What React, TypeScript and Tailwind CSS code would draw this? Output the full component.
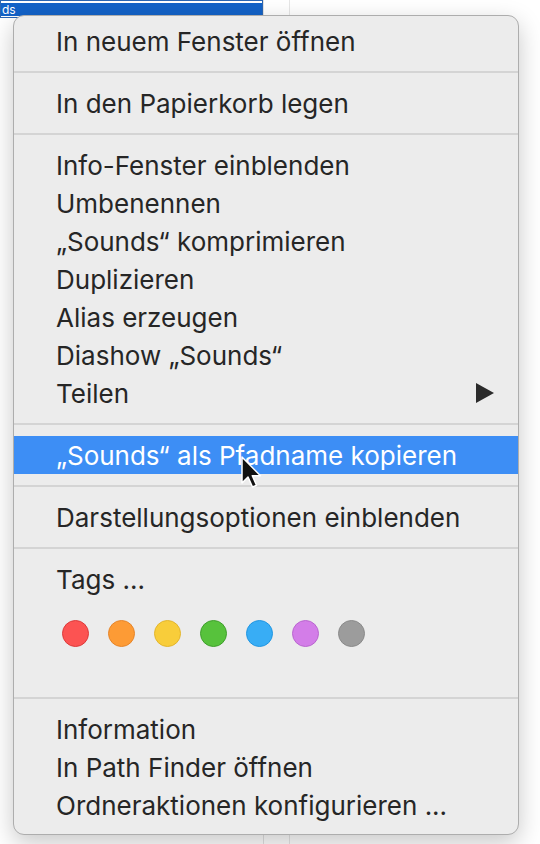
import React from "react"

const tagColors = [
  { fill: "bg-[#fc5352]", ring: "border-[#dc3a3a]" },
  { fill: "bg-[#fd9b35]", ring: "border-[#e6852a]" },
  { fill: "bg-[#f8cd3a]", ring: "border-[#e3b52c]" },
  { fill: "bg-[#57c23c]", ring: "border-[#3f9f2c]" },
  { fill: "bg-[#38adf5]", ring: "border-[#2196e2]" },
  { fill: "bg-[#d37de8]", ring: "border-[#b966cf]" },
  { fill: "bg-[#9c9c9c]", ring: "border-[#8a8a8a]" },
]

function Item({ label, arrow, active }: { label: string; arrow?: boolean; active?: boolean }) {
  return (
    <div
      className={`flex items-center h-[38px] pl-[42px] pr-[24px] ${
        active ? "bg-[#3d8ef5] text-white" : "text-[#262626]"
      }`}
    >
      <span className="flex-1 whitespace-nowrap">{label}</span>
      {arrow && (
        <svg width="18" height="20" viewBox="0 0 18 20">
          <path d="M0 0 L18 10 L0 20 Z" fill="#2b2b2b" />
        </svg>
      )}
    </div>
  )
}

function Separator() {
  return (
    <div className="h-[24px] flex items-center">
      <div className="w-full h-[2px] bg-[#d4d4d4]" />
    </div>
  )
}

export default function App() {
  return (
    <div className="relative w-[540px] h-[844px] bg-white overflow-hidden" style={{ fontFamily: 'Inter, "Liberation Sans", Arial, sans-serif' }}>
      {/* finder backdrop */}
      <div className="absolute left-[263px] top-0 w-px h-full bg-[#e2e2e2]" />
      <div className="absolute left-[289px] top-0 w-px h-full bg-[#e6e6e6]" />
      <div className="absolute left-0 top-0 w-[263px] h-[18px] border border-[#2b66b3] bg-white">
        <div className="mt-[2px] h-[13px] bg-[#1262c8] text-white text-[12px] leading-[13px] pl-[1px]">ds</div>
      </div>

      {/* context menu */}
      <div className="absolute left-[13px] top-[15px] w-[506px] rounded-[11px] border border-[#adadad] bg-[#ececec] shadow-[0_8px_24px_rgba(0,0,0,0.22)] text-[26px] pt-[6px] pb-[10px] overflow-hidden">
        <Item label="In neuem Fenster öffnen" />
        <Separator />
        <Item label="In den Papierkorb legen" />
        <Separator />
        <Item label="Info-Fenster einblenden" />
        <Item label="Umbenennen" />
        <Item label="„Sounds“ komprimieren" />
        <Item label="Duplizieren" />
        <Item label="Alias erzeugen" />
        <Item label="Diashow „Sounds“" />
        <Item label="Teilen" arrow />
        <Separator />
        <Item label="„Sounds“ als Pfadname kopieren" active />
        <Separator />
        <Item label="Darstellungsoptionen einblenden" />
        <Separator />
        <Item label="Tags ..." />
        <div className="flex gap-[19px] pl-[48px] pt-[22px] pb-[39px]">
          {tagColors.map((c, i) => (
            <div key={i} className={`w-[27px] h-[27px] rounded-full border ${c.fill} ${c.ring}`} />
          ))}
        </div>
        <Separator />
        <Item label="Information" />
        <Item label="In Path Finder öffnen" />
        <Item label="Ordneraktionen konfigurieren ..." />
      </div>

      {/* mouse pointer */}
      <svg className="absolute left-[240px] top-[456px]" width="24" height="36" viewBox="0 0 24 36">
        <path
          d="M2 1 L2 27 L8 21 L12.5 31 L16.5 29.3 L12.3 19.8 L20.5 19.8 Z"
          fill="#111"
          stroke="#fff"
          strokeWidth="1.5"
          strokeLinejoin="round"
        />
      </svg>
    </div>
  )
}
